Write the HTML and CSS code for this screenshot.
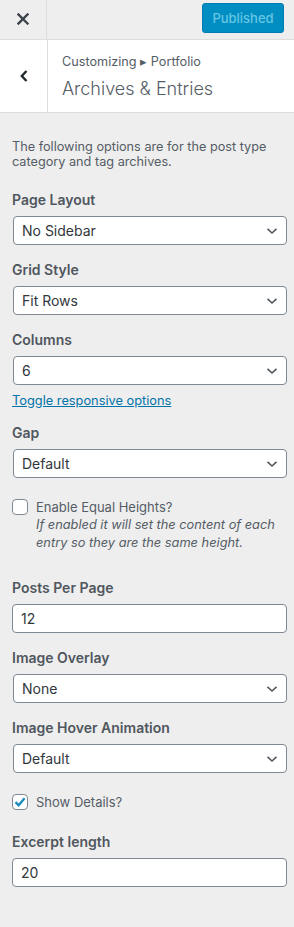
FILE: index.html
```html
<!DOCTYPE html>
<html lang="en">
<head>
    <meta charset="UTF-8">
    <meta name="viewport" content="width=device-width, initial-scale=1.0">
    <title>Archives &amp; Entries</title>
    <link rel="stylesheet" href="styles.css">
</head>
<body>

    <div class="topbar">
        <div class="close-btn">
            <svg width="12" height="12" viewBox="0 0 12 12"><path d="M1.5 1.5 L10.5 10.5 M10.5 1.5 L1.5 10.5" stroke="#3c434a" stroke-width="2.4" stroke-linecap="square"/></svg>
        </div>
        <div class="publish-btn">Published</div>
    </div>

    <div class="section-head">
        <div class="back-btn">
            <svg width="10" height="14" viewBox="0 0 10 14"><path d="M7.5 2 L2.8 7 L7.5 12" fill="none" stroke="#23282d" stroke-width="2.4"/></svg>
        </div>
        <div class="section-title">
            <span class="crumb">Customizing &#x25B8; Portfolio</span>
            <h3>Archives &amp; Entries</h3>
        </div>
    </div>

    <div class="controls">
        <p class="desc">The following options are for the post type category and tag archives.</p>

        <!-- Page Layout -->
        <div class="control">
            <span class="label">Page Layout</span>
            <div class="select">No Sidebar<svg class="chev" width="12" height="8" viewBox="0 0 12 8"><path d="M1.5 1.8 L6 6 L10.5 1.8" fill="none" stroke="#50575e" stroke-width="1.6"/></svg></div>
        </div>

        <!-- Grid Style -->
        <div class="control">
            <span class="label">Grid Style</span>
            <div class="select">Fit Rows<svg class="chev" width="12" height="8" viewBox="0 0 12 8"><path d="M1.5 1.8 L6 6 L10.5 1.8" fill="none" stroke="#50575e" stroke-width="1.6"/></svg></div>
        </div>

        <!-- Columns -->
        <div class="control tight">
            <span class="label">Columns</span>
            <div class="select">6<svg class="chev" width="12" height="8" viewBox="0 0 12 8"><path d="M1.5 1.8 L6 6 L10.5 1.8" fill="none" stroke="#50575e" stroke-width="1.6"/></svg></div>
            <a class="toggle-link" href="#">Toggle responsive options</a>
        </div>

        <!-- Gap -->
        <div class="control">
            <span class="label">Gap</span>
            <div class="select">Default<svg class="chev" width="12" height="8" viewBox="0 0 12 8"><path d="M1.5 1.8 L6 6 L10.5 1.8" fill="none" stroke="#50575e" stroke-width="1.6"/></svg></div>
        </div>

        <div class="check-row equal">
            <span class="checkbox"></span>
            <div class="check-text">
                <span>Enable Equal Heights?</span>
                <em class="note">If enabled it will set the content of each entry so they are the same height.</em>
            </div>
        </div>

        <!-- Posts Per Page -->
        <div class="control">
            <span class="label">Posts Per Page</span>
            <div class="input">12</div>
        </div>

        <!-- Image Overlay -->
        <div class="control">
            <span class="label">Image Overlay</span>
            <div class="select">None<svg class="chev" width="12" height="8" viewBox="0 0 12 8"><path d="M1.5 1.8 L6 6 L10.5 1.8" fill="none" stroke="#50575e" stroke-width="1.6"/></svg></div>
        </div>

        <!-- Image Hover Animation -->
        <div class="control">
            <span class="label">Image Hover Animation</span>
            <div class="select">Default<svg class="chev" width="12" height="8" viewBox="0 0 12 8"><path d="M1.5 1.8 L6 6 L10.5 1.8" fill="none" stroke="#50575e" stroke-width="1.6"/></svg></div>
        </div>

        <div class="check-row details">
            <span class="checkbox checked">
                <svg width="14" height="14" viewBox="0 0 14 14"><path d="M2.5 7.2 L5.6 10.2 L11.6 3.2" fill="none" stroke="#1e8cbe" stroke-width="2.4"/></svg>
            </span>
            <div class="check-text"><span>Show Details?</span></div>
        </div>

        <!-- Excerpt length -->
        <div class="control">
            <span class="label">Excerpt length</span>
            <div class="input">20</div>
        </div>
    </div>

</body>
</html>
```

FILE: styles.css
```css
body {
    font-family: Inter, "Noto Sans", sans-serif;
    background-color: #eeeeee;
    color: #555d66;
    margin: 0;
    padding: 0;
}

.topbar {
    height: 39px;
    border-bottom: 1px solid #dddddd;
    display: flex;
    align-items: flex-start;
    justify-content: space-between;
}

.close-btn {
    width: 47px;
    height: 39px;
    border-right: 1px solid #dddddd;
    display: flex;
    align-items: center;
    justify-content: center;
    padding-bottom: 2px;
    box-sizing: border-box;
}

.publish-btn {
    margin: 3px 10px 0 0;
    width: 82px;
    height: 30px;
    box-sizing: border-box;
    background-color: #008ec2;
    border: 1px solid #007cb2;
    border-radius: 3px;
    color: #66c6e4;
    font-size: 13px;
    font-weight: 500;
    display: flex;
    align-items: center;
    justify-content: center;
}

.section-head {
    display: flex;
    background-color: white;
    height: 72px;
    border-bottom: 1px solid #dddddd;
}

.back-btn {
    width: 47px;
    border-right: 1px solid #dddddd;
    display: flex;
    align-items: center;
    justify-content: center;
}

.section-title {
    padding: 14px 0 0 14px;
}

.crumb {
    display: block;
    font-size: 12.7px;
    line-height: 16px;
    color: #555d66;
}

.section-title h3 {
    margin: 7px 0 0;
    font-size: 18px;
    line-height: 24px;
    font-weight: 300;
    color: #555d66;
}

.controls {
    padding: 26px 7px 30px 12px;
}

.desc {
    margin: 0 0 21px;
    font-size: 12.7px;
    line-height: 15px;
}

.control {
    margin-bottom: 15px;
}

.control.tight {
    margin-bottom: 12px;
}

.label {
    display: block;
    font-size: 14px;
    font-weight: 600;
    line-height: 20px;
    margin-bottom: 6px;
    color: #50575e;
}

.select,
.input {
    height: 29px;
    box-sizing: border-box;
    background-color: white;
    border: 1px solid #7e8993;
    border-radius: 4px;
    padding: 0 8px;
    display: flex;
    align-items: center;
    justify-content: space-between;
    font-size: 14px;
    color: #32373c;
}

.select {
    margin-left: 1px;
}

.toggle-link {
    display: block;
    margin-top: 6px;
    font-size: 12.8px;
    line-height: 20px;
    color: #0073aa;
    text-decoration: underline;
}

.check-row {
    display: flex;
    gap: 8px;
    font-size: 13px;
    line-height: 18px;
}

.check-row.equal {
    margin-top: 20px;
    margin-bottom: 26px;
}

.check-row.details {
    margin-top: 20px;
    margin-bottom: 21px;
}

.checkbox {
    width: 16px;
    height: 16px;
    box-sizing: border-box;
    flex-shrink: 0;
    margin-top: 1px;
    background-color: white;
    border: 1px solid #7e8993;
    border-radius: 4px;
    display: flex;
    align-items: center;
    justify-content: center;
}

.check-text span {
    display: block;
}

.note {
    display: block;
    font-size: 12.8px;
    color: #555d66;
}
```
